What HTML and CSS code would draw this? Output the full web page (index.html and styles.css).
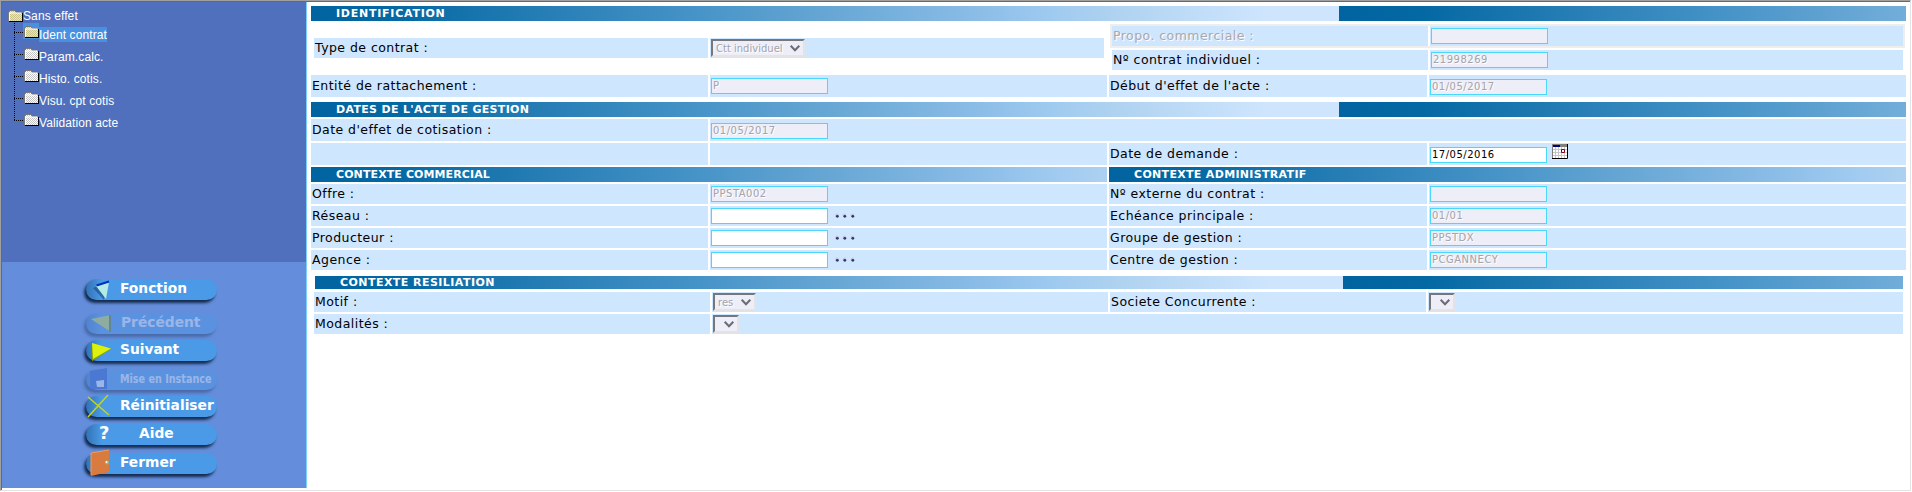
FILE: index.html
```html
<!DOCTYPE html>
<html lang="fr">
<head>
<meta charset="utf-8">
<title>Ident contrat</title>
<link rel="stylesheet" href="styles.css">
</head>
<body>
<svg class="defs" width="0" height="0" aria-hidden="true">
  <defs>
    <pattern id="dither-y" width="2" height="2" patternUnits="userSpaceOnUse"><rect width="2" height="2" fill="#fff04a"/><rect width="1" height="1" fill="#c9c48a"/><rect x="1" y="1" width="1" height="1" fill="#c9c48a"/></pattern>
    <pattern id="dither-g" width="2" height="2" patternUnits="userSpaceOnUse"><rect width="2" height="2" fill="#fff"/><rect width="1" height="1" fill="#c3c3c3"/><rect x="1" y="1" width="1" height="1" fill="#c3c3c3"/></pattern>
    <g id="folder-shape">
      <path d="M1 11V2l1-1h5l1 2h6v8z"/>
      <path d="M.5 11V2.500L2 .5h5L8.500 2.500H14" fill="none" stroke="#7b7b7b"/>
      <path d="M1.500 11V3h12" fill="none" stroke="#fff"/>
      <path d="M1 11.500h14M14.500 3v9" fill="none" stroke="#000"/>
    </g>
    <g id="chevron"><path d="M.7.7l4.300 4.500L9.300.7" fill="none" stroke="#696d73" stroke-width="2"/></g>
    <g id="dots"><g fill="#c9c4ee"><circle cx="2" cy="2.300" r="1.800"/><circle cx="9.500" cy="2.300" r="1.800"/><circle cx="17.500" cy="2.300" r="1.800"/></g><g fill="#34345f"><circle cx="2.300" cy="3.300" r="1.400"/><circle cx="9.800" cy="3.300" r="1.400"/><circle cx="17.800" cy="3.300" r="1.400"/></g></g>
  </defs>
</svg>
<div class="frame">
  <aside class="side">
    <nav class="tree">
      <div class="root"><svg class="folder" width="15" height="12"><use href="#folder-shape" fill="url(#dither-y)"/></svg><span>Sans effet</span></div>
      <ul class="branch">
        <li class="on"><i></i><b><svg class="folder" width="15" height="12"><use href="#folder-shape" fill="url(#dither-y)"/></svg></b><span>Ident contrat</span></li>
        <li><i></i><b><svg class="folder" width="15" height="12"><use href="#folder-shape" fill="url(#dither-g)"/></svg></b><span>Param.calc.</span></li>
        <li><i></i><b><svg class="folder" width="15" height="12"><use href="#folder-shape" fill="url(#dither-g)"/></svg></b><span>Histo. cotis.</span></li>
        <li><i></i><b><svg class="folder" width="15" height="12"><use href="#folder-shape" fill="url(#dither-g)"/></svg></b><span>Visu. cpt cotis</span></li>
        <li><i></i><b><svg class="folder" width="15" height="12"><use href="#folder-shape" fill="url(#dither-g)"/></svg></b><span>Validation acte</span></li>
      </ul>
    </nav>
    <div class="actions">
      <div class="btn g13"><svg width="34" height="21"><path d="M7 9l14-6-3 18z" fill="#0b3158" opacity=".45"/><path d="M10 7l13-4-3 17z" fill="#b5ebe6"/><path d="M10.500 6.500l12.500-4" stroke="#0030c0" stroke-width="2"/></svg><span>Fonction</span></div>
      <div class="btn off g6"><svg width="34" height="21"><path d="M5 6l20-4v17z" fill="#e0e632"/><path d="M24 2v17" stroke="#5c7c14" stroke-width="2"/></svg><span class="in1">Précédent</span></div>
      <div class="btn g8"><svg width="34" height="21"><path d="M6 3v18l2-1 17-11z" fill="#84a000"/><path d="M6 3l19 5.500L7 19z" fill="#dcf10c"/></svg><span>Suivant</span></div>
      <div class="btn off g6"><svg width="34" height="21"><path d="M4 2l17-3v21H4z" fill="#1c50c0"/><path d="M10 12l8-1v7h-7z" fill="#fff"/></svg><span class="small">Mise en Instance</span></div>
      <div class="btn g7"><svg width="34" height="21"><path d="M2 21L22-1M2 1l21 18" fill="none" stroke="#c3d618" stroke-width="1.500"/></svg><span>Réinitialiser</span></div>
      <div class="btn g8"><em>?</em><span class="mid">Aide</span></div>
      <div class="btn"><svg width="34" height="23"><path d="M5 1L23-2v22L5 24z" fill="#d97a3e"/><path d="M5 1v22M5 1L23-2" fill="none" stroke="#f09b60"/><circle cx="21" cy="10.500" r="2" fill="#7fbf9c"/><circle cx="20.500" cy="10" r="1" fill="#fff"/></svg><span>Fermer</span></div>
    </div>
  </aside>
  <main class="form">
    <h2 class="bar wide">IDENTIFICATION</h2>
    <div class="ident">
      <div class="row left"><div class="c k">Type de contrat :</div><div class="c v"><div class="select type">Ctt individuel<svg width="10" height="7"><use href="#chevron"/></svg></div></div></div>
      <div class="right">
        <div class="row propo"><div class="c k">Propo. commerciale :</div><div class="c v"><div class="field"></div></div></div>
        <div class="row num"><div class="c k">Nº contrat individuel :</div><div class="c v"><div class="field">21998269</div></div></div>
      </div>
    </div>
    <div class="row r4 tall"><div class="c k">Entité de rattachement :</div><div class="c up"><div class="field">P</div></div><div class="c k">Début d'effet de l'acte :</div><div class="c"><div class="field">01/05/2017</div></div></div>
    <h2 class="bar gap5">DATES DE L'ACTE DE GESTION</h2>
    <div class="row r2 tall"><div class="c k">Date d'effet de cotisation :</div><div class="c"><div class="field">01/05/2017</div></div></div>
    <div class="row r4 tall"><div class="c"></div><div class="c"></div><div class="c k">Date de demande :</div><div class="c dem"><div class="field edit date">17/05/2016</div><svg class="cal" width="16" height="15"><path d="M0 0h16v15H0z" fill="#fff"/><path d="M.5 5.500H15M.5 8.500H15M.5 11.500H15M3.500 3v11M6.500 3v11M9.500 3v11M12.500 3v11" stroke="#c6c6c6"/><path d="M0 0h16v3H0z" fill="#808080"/><path d="M1 1h7v2H1z" fill="#000086"/><path d="M.5 0v15" stroke="#808080"/><path d="M0 14.500h15.500V0" fill="none" stroke="#000"/><path d="M9.500 5.500h3v3h-3z" fill="#fff" stroke="#800010"/></svg></div></div>
    <div class="duo"><h2 class="bar tight">CONTEXTE COMMERCIAL</h2><h2 class="bar">CONTEXTE ADMINISTRATIF</h2></div>
    <div class="row r4"><div class="c k">Offre :</div><div class="c"><div class="field">PPSTA002</div></div><div class="c k">Nº externe du contrat :</div><div class="c"><div class="field"></div></div></div>
    <div class="row r4"><div class="c k">Réseau :</div><div class="c"><div class="field edit"></div><svg class="dots" width="20" height="6"><use href="#dots"/></svg></div><div class="c k">Echéance principale :</div><div class="c"><div class="field">01/01</div></div></div>
    <div class="row r4"><div class="c k">Producteur :</div><div class="c"><div class="field edit"></div><svg class="dots" width="20" height="6"><use href="#dots"/></svg></div><div class="c k">Groupe de gestion :</div><div class="c"><div class="field">PPSTDX</div></div></div>
    <div class="row r4"><div class="c k">Agence :</div><div class="c"><div class="field edit"></div><svg class="dots" width="20" height="6"><use href="#dots"/></svg></div><div class="c k">Centre de gestion :</div><div class="c"><div class="field">PCGANNECY</div></div></div>
    <section class="resil">
      <h2 class="bar">CONTEXTE RESILIATION</h2>
      <div class="row rr"><div class="c k">Motif :</div><div class="c"><div class="select res">res<svg width="10" height="7"><use href="#chevron"/></svg></div></div><div class="c k">Societe Concurrente :</div><div class="c"><div class="select none"><svg width="10" height="7"><use href="#chevron"/></svg></div></div></div>
      <div class="row rr2"><div class="c k">Modalités :</div><div class="c"><div class="select none"><svg width="10" height="7"><use href="#chevron"/></svg></div></div></div>
    </section>
  </main>
</div>
</body>
</html>
```

FILE: styles.css
```css
* { box-sizing: border-box; }
body { margin: 0; background: #fff; font-family: "DejaVu Sans", sans-serif; overflow: hidden; }
.defs { display: block; height: 0; }
.frame {
  width: 1911px; height: 491px; display: flex;
  border-top: 1px solid #a0a0a0; border-left: 1px solid #a0a0a0;
  border-right: 1px solid #e3e3e3; border-bottom: 1px solid #e3e3e3;
  box-shadow: inset 0 1px #696969, inset 1px 0 #696969;
}
svg { overflow: visible; display: block; flex: none; }

/* Sidebar */
.side { width: 305px; height: 486px; margin: 1px 0 0 1px; border-right: 1px solid #78d2f8; background: #648edc; flex: none; }
.tree { height: 260px; padding: 7px 0 0 6px; background: #5070bd; font: 12px/15px "Liberation Sans", sans-serif; letter-spacing: .1px; color: #fff; }
.root { display: flex; align-items: center; height: 14px; }
.branch { list-style: none; margin: 0 0 0 6px; padding: 0; }
.branch li { display: flex; height: 22px; background: repeating-linear-gradient(#000 0 1px, transparent 1px 2px) 0 0 / 1px 100% no-repeat; }
.branch li:last-child { background-size: 1px 9px; }
.branch i { width: 9px; height: 1px; margin-top: 9px; background: repeating-linear-gradient(90deg, #000 0 1px, transparent 1px 2px); }
.branch b { width: 16px; height: 16px; padding: 3px 0 0 1px; }
.branch span { height: 15px; margin-top: 4px; padding-top: 1px; white-space: nowrap; }
.on b, .on span { background: #4a90e0; }

.actions { padding: 17px 0 0 84px; }
.btn {
  width: 131px; height: 21px; display: flex; align-items: center; border-radius: 11px;
  background: linear-gradient(90deg, rgba(8,40,80,.35), rgba(8,40,80,0) 16px) #4a9ae8;
  box-shadow: -2px 3px 3px rgba(5,25,55,.85);
  font-weight: bold; font-size: 13.800px; line-height: 16px; color: #fff;
}
.btn span { white-space: nowrap; padding-bottom: 4px; }
.btn em { width: 34px; padding: 0 0 3px 13px; font-style: normal; font-size: 18px; }
.btn .mid { padding-left: 19px; }
.btn .in1 { padding-left: 1px; }
.btn .small { width: 92px; font-size: 11.500px; padding: 0 0 2px; transform: scaleX(.836); transform-origin: 0 50%; }
.off { opacity: .35; }
.g13 { margin-bottom: 13px; }
.g8 { margin-bottom: 8px; }
.g7 { margin-bottom: 7px; }
.g6 { margin-bottom: 6px; }

/* Form */
.form { width: 1599px; padding: 5px 0 0 4px; }
.bar {
  height: 15px; margin: 0 0 2px; padding-left: 25px;
  font-size: 11px; line-height: 16px; letter-spacing: .32px; color: #fff; white-space: nowrap;
  background: linear-gradient(90deg, #0164a0 0, #0468a3 8%, #1c77af 18%, #4794c8 38%, #66a6d4 50%, #8bbde7 65%, #9fcaf0 72%, #aed2f0 78%, #cfe5fe 93%) 0 0 / 1028px 100% repeat-x;
}
.wide { letter-spacing: .75px; }
.tight { letter-spacing: .1px; }
.row { display: grid; column-gap: 2px; height: 20px; margin-bottom: 2px; }
.tall { height: 22px; }
.r4 { grid-template-columns: 397px 397px 318px 477px; }
.r2 { grid-template-columns: 397px 1196px; }
.c { display: flex; align-items: center; padding-left: 1px; background: #cfe6ff; white-space: nowrap; }
.k { font-size: 12.500px; letter-spacing: .45px; color: #000; padding-bottom: 1px; }
.field {
  width: 117px; height: 16px; padding-left: 1px; border: 1px solid #4bd6fb; background: #eeeef8;
  font-size: 10px; line-height: 13px; letter-spacing: .5px; color: #a3a3a8; text-shadow: 1px 1px #fff;
}
.edit { background: #fff; color: #000; text-shadow: none; }
.tall .field { margin-top: 2px; }
.tall .up .field { margin-top: 0; }
.cal { margin: -5px 0 0 5px; }
.dots { margin: 0 0 0 7px; }
.duo { display: grid; grid-template-columns: 796px 797px; column-gap: 2px; }

.ident { display: flex; height: 52px; }
.left { grid-template-columns: 394px 394px; margin: 15px 0 0 3px; }
.right { margin: 1px 0 0 6px; }
.right .row { grid-template-columns: 316px 473px; }
.propo { width: 795px; }
.right .propo { height: 24px; border: 2px solid #eee; }
.propo .k { color: #a9a9ad; text-shadow: 1px 1px #fff; }
.num { margin-left: 2px; }
.gap5 { margin-top: 5px; }

.select {
  display: flex; align-items: center; justify-content: space-between;
  height: 18px; padding: 1px 3px 0 3px; border: 2px solid; border-color: #74787e #e3e3e6 #e3e3e6 #74787e;
  background: #eeeef8; font-size: 10px; line-height: 12px; color: #a3a3a8; text-shadow: 1px 1px #fff;
}
.type { width: 94px; }
.res { width: 43px; }
.none { width: 26px; justify-content: flex-end; }

.resil { margin: 4px 0 0 3px; }
.resil .bar { width: 1588px; height: 13px; line-height: 14px; letter-spacing: .45px; margin: 6px 0 3px 1px; }
.rr { grid-template-columns: 396px 396px 316px 475px; }
.rr2 { grid-template-columns: 396px 1191px; }
```
